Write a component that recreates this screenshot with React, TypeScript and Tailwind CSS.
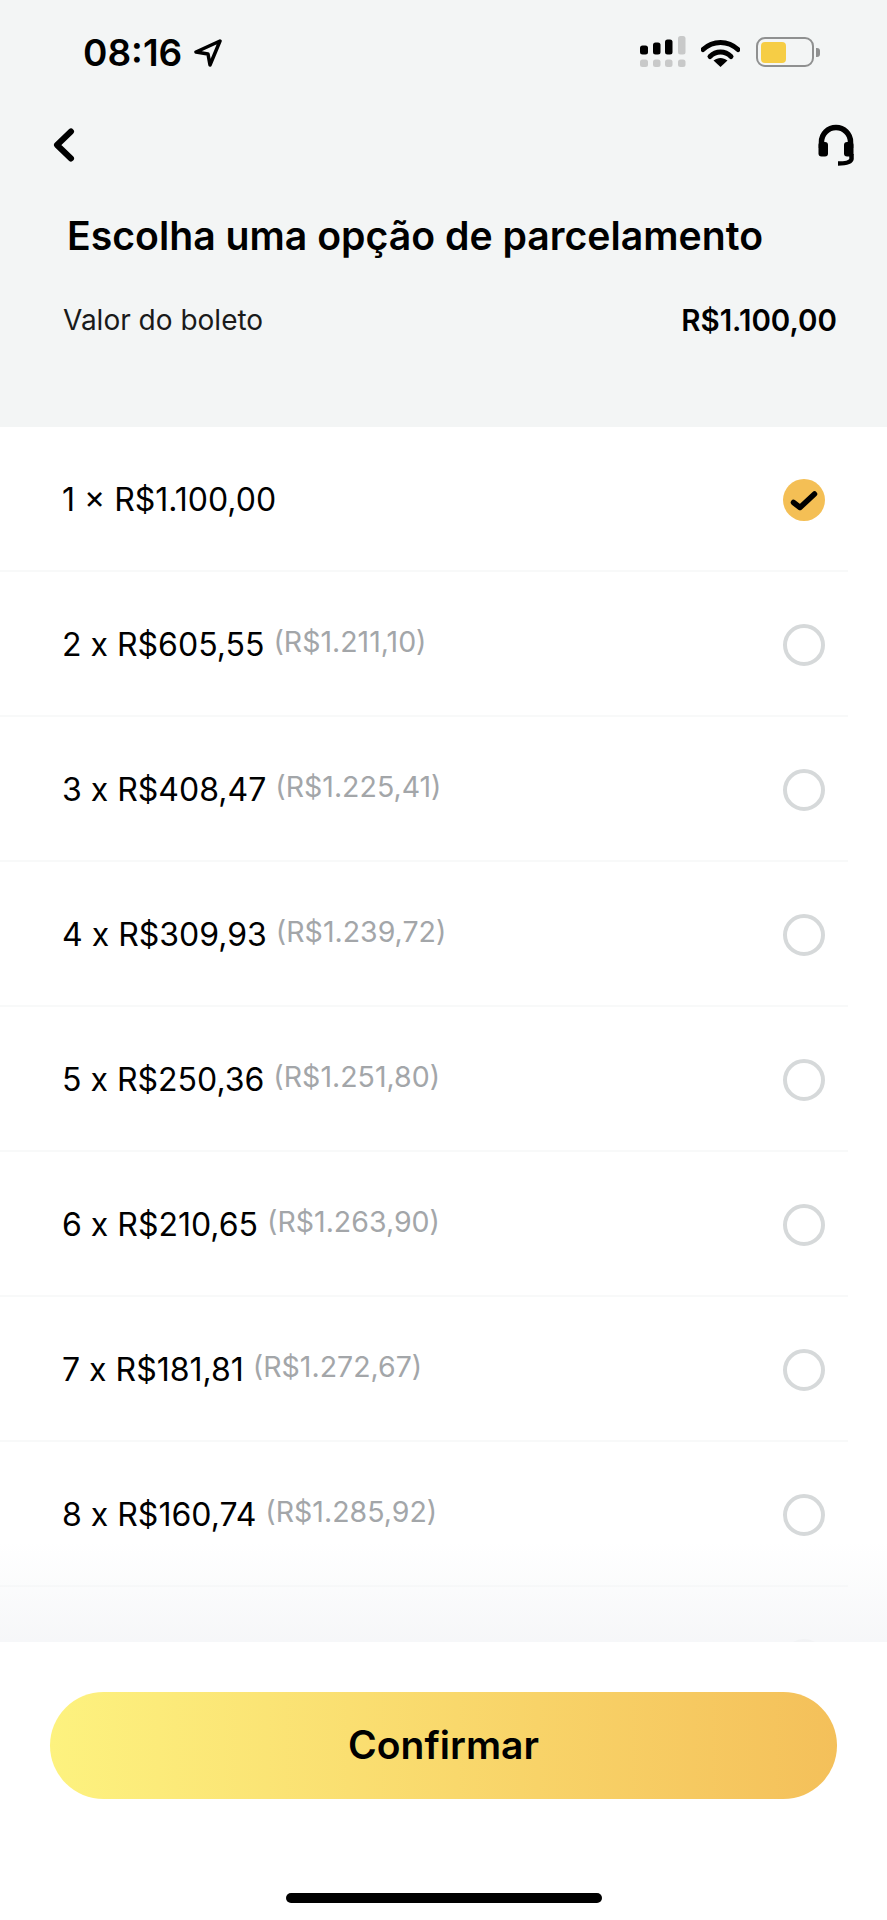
import React from 'react';

const options = [
  { main: '1 × R$1.100,00', total: '' },
  { main: '2 x R$605,55', total: '(R$1.211,10)' },
  { main: '3 x R$408,47', total: '(R$1.225,41)' },
  { main: '4 x R$309,93', total: '(R$1.239,72)' },
  { main: '5 x R$250,36', total: '(R$1.251,80)' },
  { main: '6 x R$210,65', total: '(R$1.263,90)' },
  { main: '7 x R$181,81', total: '(R$1.272,67)' },
  { main: '8 x R$160,74', total: '(R$1.285,92)' },
  // only the top of this row's radio shows above the footer
  { main: '', total: '' },
];

function StatusIcons() {
  return (
    <div className="flex items-center">
      {/* signal */}
      <svg width="46" height="32" viewBox="0 0 46 32">
        <rect x="0" y="9.5" width="8" height="9" rx="2.5" fill="#000" />
        <rect x="13" y="6.5" width="7.5" height="12" rx="2.5" fill="#000" />
        <rect x="25" y="3.5" width="7.5" height="15" rx="2.5" fill="#000" />
        <rect x="38" y="0" width="7.5" height="18.5" rx="2.5" fill="#c8c9c9" />
        <rect x="0" y="23.5" width="8" height="7.5" rx="2.5" fill="#c8c9c9" />
        <rect x="13" y="23.5" width="7.5" height="7.5" rx="2.5" fill="#c8c9c9" />
        <rect x="25" y="23.5" width="7.5" height="7.5" rx="2.5" fill="#c8c9c9" />
        <rect x="38" y="23.5" width="7.5" height="7.5" rx="2.5" fill="#c8c9c9" />
      </svg>
      {/* wifi */}
      <svg className="ml-[15px]" width="39" height="29" viewBox="0 0 39 29">
        <path d="M2 11.5C12 2 27 2 37 11.5" fill="none" stroke="#000" strokeWidth="5" strokeLinecap="round" />
        <path d="M9 18.5C15 12.5 24 12.5 30 18.5" fill="none" stroke="#000" strokeWidth="5" strokeLinecap="round" />
        <path d="M19.5 29L12.5 22.5C17 19 22 19 26.5 22.5Z" fill="#000" />
      </svg>
      {/* battery */}
      <div className="ml-[16px] flex items-center">
        <div className="flex h-[30px] w-[58px] items-stretch rounded-[9px] border-[2.5px] border-[#8f9090] p-[2.5px]">
          <div className="w-[25px] rounded-[4px] bg-[#f6cd45]" />
        </div>
        <div className="ml-[2px] h-[9px] w-[4px] rounded-r-[3px] bg-[#8f9090]" />
      </div>
    </div>
  );
}

function Check() {
  return (
    <svg width="42" height="42" viewBox="0 0 42 42">
      <circle cx="21" cy="21" r="21" fill="#f4bf55" />
      <path d="M10.5 23.5L17 28.5L31.5 15" fill="none" stroke="#000" strokeWidth="5.5" strokeLinecap="round" strokeLinejoin="round" />
    </svg>
  );
}

export default function App() {
  return (
    <div className="flex h-[1920px] w-[887px] flex-col overflow-hidden bg-white font-['Inter',sans-serif] text-black">
      {/* Header */}
      <div className="h-[427px] shrink-0 bg-[#f3f5f5]">
        <div className="flex h-[106px] items-start justify-between pl-[83px] pr-[67px] pt-[36px]">
          <div className="flex items-center">
            <span className="text-[37px] font-semibold leading-[34px]">08:16</span>
            <svg className="ml-[12px]" width="28" height="28" viewBox="0 0 28 28">
              <path d="M26 2L2 13L14 15L16 26Z" fill="none" stroke="#000" strokeWidth="3.5" strokeLinejoin="round" />
            </svg>
          </div>
          <StatusIcons />
        </div>

        <div className="flex items-start justify-between pl-[53px] pr-[33px] pt-[22px]">
          <svg width="22" height="34" viewBox="0 0 22 34">
            <path d="M18 3.5L4 17L18 30.5" fill="none" stroke="#000" strokeWidth="6" strokeLinecap="round" strokeLinejoin="round" />
          </svg>
          {/* headset */}
          <svg className="mt-[-4px]" width="36" height="42" viewBox="0 0 36 42">
            <path d="M3.5 24V18A14.5 14.5 0 0 1 32.5 18V24" fill="none" stroke="#000" strokeWidth="5.5" />
            <rect x="0.5" y="18" width="9.5" height="14.5" rx="3" fill="#000" />
            <rect x="26" y="18" width="9.5" height="14.5" rx="3" fill="#000" />
            <path d="M33.5 30V35C33 38.5 28 39.5 20 39.5" fill="none" stroke="#000" strokeWidth="4.5" />
          </svg>
        </div>

        <h1 className="mt-[48px] pl-[67px] text-[39.2px] font-semibold leading-[44px]">
          Escolha uma opção de parcelamento
        </h1>

        <div className="mt-[44px] flex items-center justify-between pl-[63px] pr-[50px]">
          <span className="text-[28px] leading-[36px] text-[#1a1a1a]">Valor do boleto</span>
          <span className="text-[29.5px] font-semibold leading-[36px]">R$1.100,00</span>
        </div>
      </div>

      {/* Installment options */}
      <div className="relative flex-1 overflow-hidden">
        {options.map((option, index) => (
          <div key={index} className="flex h-[145px] w-[848px] items-center border-b-2 border-[#f8f9f9] pl-[62px] pt-[2px]">
            {option.main && <span className="text-[32px] leading-[40px]">{option.main}</span>}
            {option.total && (
              <span className="ml-[9px] mt-[-5px] text-[28.5px] leading-[36px] text-[#a3a6a9]">{option.total}</span>
            )}
            <div className="ml-auto mr-[23px] shrink-0">
              {index === 0 ? (
                <Check />
              ) : (
                <div className="h-[42px] w-[42px] rounded-full border-[4px] border-[#d6d9da]" />
              )}
            </div>
          </div>
        ))}
        {/* fade above the footer */}
        <div className="absolute inset-x-0 bottom-0 h-[100px] bg-gradient-to-b from-white/0 to-[#f5f6f8]/90" />
      </div>

      {/* Footer */}
      <div className="flex h-[278px] shrink-0 flex-col items-center bg-white pt-[50px]">
        <button className="flex h-[107px] w-[787px] items-center justify-center rounded-full bg-gradient-to-r from-[#fdf27f] to-[#f4c05a] text-[39px] font-semibold">
          Confirmar
        </button>
        <div className="mt-[94px] h-[10px] w-[316px] rounded-full bg-black" />
      </div>
    </div>
  );
}
